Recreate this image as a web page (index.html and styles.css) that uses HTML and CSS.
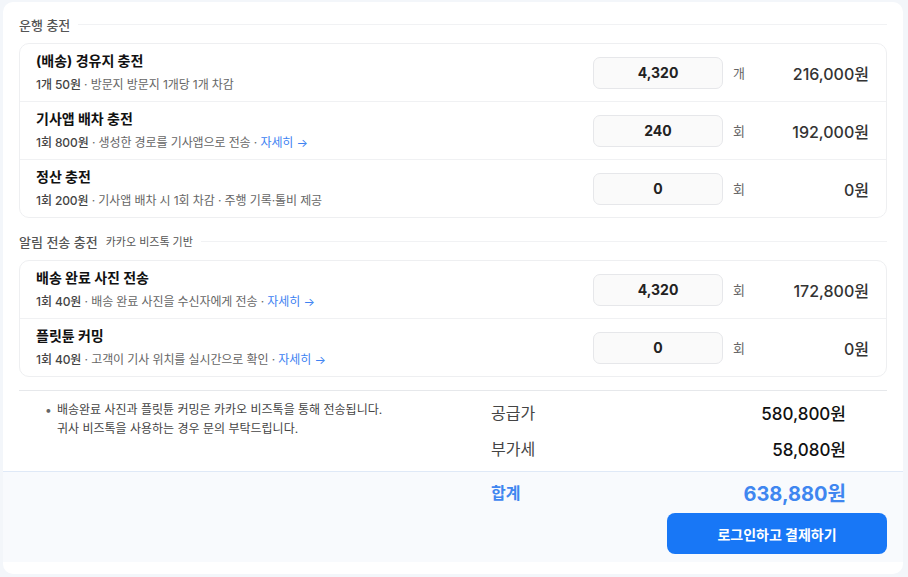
FILE: index.html
```html
<!DOCTYPE html>
<html lang="ko">
<head>
<meta charset="utf-8">
<link rel="stylesheet" href="styles.css">
</head>
<body>
<div class="card">
  <div class="sec-head"><span class="sec-title">운행 충전</span><span class="sec-line"></span></div>
  <div class="list">
    <div class="row">
      <div class="info">
        <div class="title">(배송) 경유지 충전</div>
        <div class="desc"><b>1개 50원</b> · 방문지 방문지 1개당 1개 차감</div>
      </div>
      <div class="qty">4,320</div><div class="unit">개</div><div class="amount">216,000원</div>
    </div>
    <div class="row">
      <div class="info">
        <div class="title">기사앱 배차 충전</div>
        <div class="desc"><b>1회 800원</b> · 생성한 경로를 기사앱으로 전송 · <a class="more">자세히 →</a></div>
      </div>
      <div class="qty">240</div><div class="unit">회</div><div class="amount">192,000원</div>
    </div>
    <div class="row">
      <div class="info">
        <div class="title">정산 충전</div>
        <div class="desc"><b>1회 200원</b> · 기사앱 배차 시 1회 차감 · 주행 기록·톨비 제공</div>
      </div>
      <div class="qty">0</div><div class="unit">회</div><div class="amount">0원</div>
    </div>
  </div>

  <div class="sec-head sec2"><span class="sec-title">알림 전송 충전</span><span class="sec-sub">카카오 비즈톡 기반</span><span class="sec-line"></span></div>
  <div class="list">
    <div class="row">
      <div class="info">
        <div class="title">배송 완료 사진 전송</div>
        <div class="desc"><b>1회 40원</b> · 배송 완료 사진을 수신자에게 전송 · <a class="more">자세히 →</a></div>
      </div>
      <div class="qty">4,320</div><div class="unit">회</div><div class="amount">172,800원</div>
    </div>
    <div class="row">
      <div class="info">
        <div class="title">플릿튠 커밍</div>
        <div class="desc"><b>1회 40원</b> · 고객이 기사 위치를 실시간으로 확인 · <a class="more">자세히 →</a></div>
      </div>
      <div class="qty">0</div><div class="unit">회</div><div class="amount">0원</div>
    </div>
  </div>

  <div class="bottom">
    <ul class="notes">
      <li>배송완료 사진과 플릿튠 커밍은 카카오 비즈톡을 통해 전송됩니다.<br>귀사 비즈톡을 사용하는 경우 문의 부탁드립니다.</li>
    </ul>
    <div class="summary">
      <div class="sum-row"><span class="sum-label">공급가</span><span class="sum-val">580,800원</span></div>
      <div class="sum-row"><span class="sum-label">부가세</span><span class="sum-val">58,080원</span></div>
    </div>
  </div>

  <div class="footer">
    <div class="total-row"><span class="total-label">합계</span><span class="total-val">638,880원</span></div>
    <button class="btn">로그인하고 결제하기</button>
  </div>
</div>
</body>
</html>
```
FILE: styles.css
```css
* { box-sizing: border-box; }
html, body { margin: 0; }
body {
  background: #f3f6fa;
  padding: 2px 5px 3px 3px;
  font-family: Inter, "Noto Sans CJK KR", sans-serif;
  color: #111;
}
.card {
  background: #fff;
  border-radius: 10px;
  padding: 13px 16px 12px 16px;
  height: 572px;
  overflow: hidden;
}
.sec-head {
  display: flex;
  align-items: center;
  height: 18px;
  margin: 0 0 10px 0;
}
.sec2 { margin-top: 14px; }
.sec-title { font-size: 13px; color: #555; font-weight: 500; }
.sec-sub { font-size: 11px; color: #555; margin-left: 8px; }
.sec-line { flex: 1; height: 1px; background: #f1f2f4; margin-left: 8px; }

.list {
  border: 1px solid #eeeff1;
  border-radius: 10px;
}
.row {
  display: flex;
  align-items: center;
  height: 58px;
  padding: 0 17px 0 16px;
  border-top: 1px solid #f0f1f3;
}
.row:first-child { border-top: 0; height: 57px; }
.info { flex: 1; }
.title { font-size: 14px; font-weight: 700; line-height: 20px; color: #111; }
.desc { font-size: 12px; line-height: 18px; margin-top: 5px; color: #666; letter-spacing: -0.1px; }
.desc b { font-weight: 500; color: #444; }
.more { color: #3d82f2; }
.qty {
  width: 130px;
  height: 32px;
  border: 1px solid #e6e7ea;
  border-radius: 7px;
  background: #fafafa;
  text-align: center;
  line-height: 30px;
  font-size: 14px;
  font-weight: 700;
  color: #222;
  margin-right: 1px;
}
.unit { width: 23px; margin-left: 9px; font-size: 13px; color: #666; }
.amount { width: 113px; text-align: right; font-size: 16px; font-weight: 500; color: #333; }

.bottom {
  display: flex;
  margin-top: 13px;
  border-top: 1px solid #e6e8eb;
}
.notes {
  flex: 1;
  list-style: none;
  margin: 0;
  padding: 9px 0 0 26px;
}
.notes li {
  position: relative;
  padding-left: 12px;
  font-size: 12px;
  line-height: 19px;
  color: #444;
}
.notes li::before {
  content: "•";
  position: absolute;
  left: 0;
  top: 0;
  color: #666;
}
.summary { width: 355px; margin-right: 41px; padding-top: 3px; }
.sum-row {
  display: flex;
  justify-content: space-between;
  align-items: center;
  height: 36px;
}
.sum-label { font-size: 16px; color: #444; }
.sum-val { font-size: 17px; font-weight: 500; color: #111; }

.footer {
  margin: 5px -16px 0;
  background: #f8fafd;
  border-top: 1px solid #dfe9f7;
  padding: 2px 16px 8px;
  display: flex;
  flex-direction: column;
  align-items: flex-end;
}
.total-row {
  width: 355px;
  margin-right: 41px;
  height: 36px;
  display: flex;
  justify-content: space-between;
  align-items: center;
}
.total-label { font-size: 16px; font-weight: 700; color: #3f86f0; }
.total-val { font-size: 20px; font-weight: 700; color: #3f86f0; }
.btn {
  width: 220px;
  height: 41px;
  border: 0;
  border-radius: 8px;
  background: #1877f6;
  color: #fff;
  font-family: inherit;
  font-size: 14px;
  font-weight: 700;
  margin-top: 3px;
}
```
